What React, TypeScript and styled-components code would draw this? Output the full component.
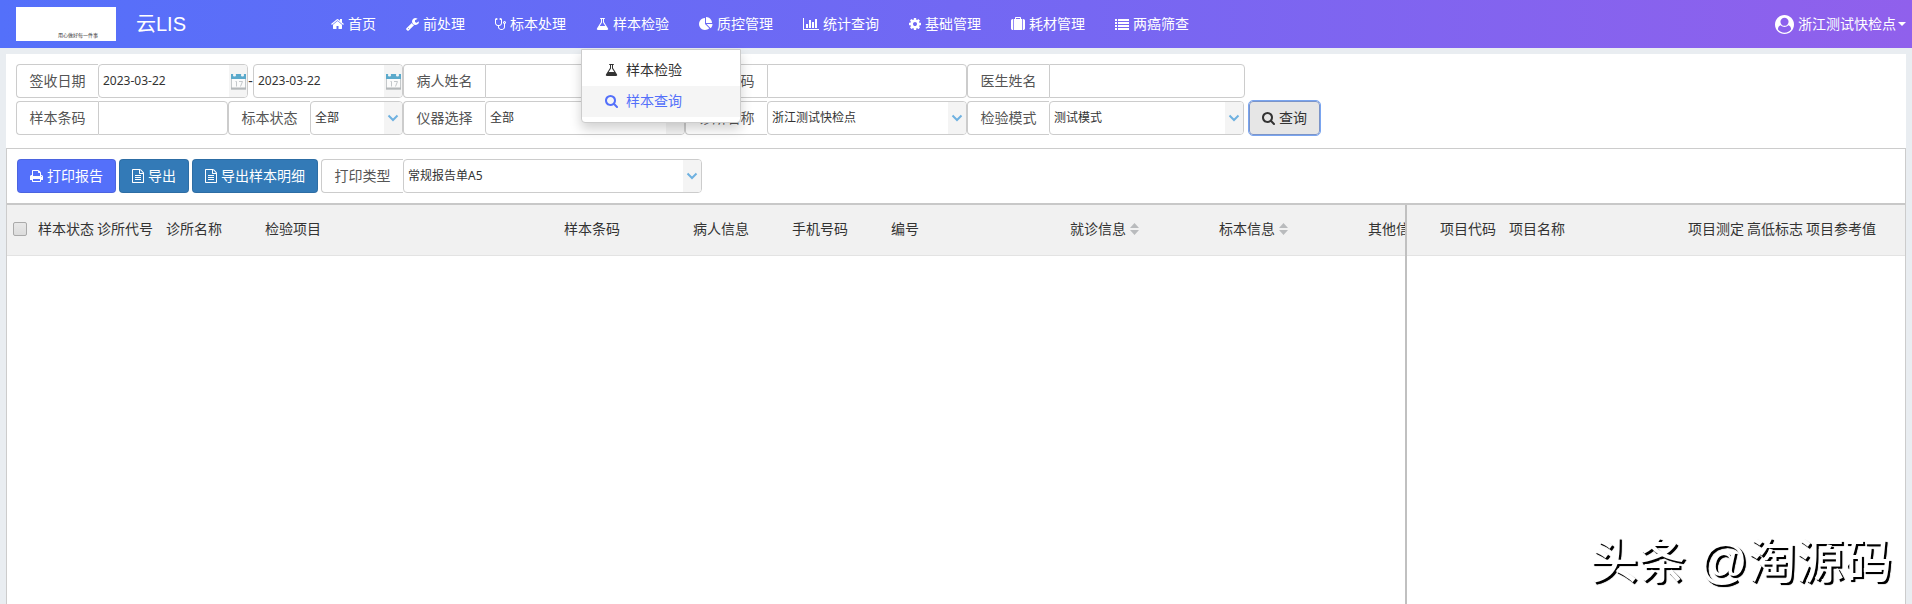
import React from 'react';
import styled, { createGlobalStyle, css } from 'styled-components';

const cjk = "'Noto Sans', 'Noto Sans CJK SC', sans-serif";

const GlobalStyle = createGlobalStyle`
  *, *::before, *::after { box-sizing: border-box; }
  body {
    margin: 0;
    background: #e9edf1;
    color: #333;
    font-family: ${cjk};
    font-size: 14px;
    line-height: 20px;
  }
  button, input, select { font: inherit; color: inherit; }
`;

/* ---------- icons ---------- */

type IconName =
  | 'home' | 'wrench' | 'stethoscope' | 'flask' | 'pie' | 'bar' | 'cog'
  | 'suitcase' | 'list' | 'search' | 'print' | 'file';

const icons: Record<IconName, { w: number; x: number; vw: number; d: string }> = {
  home: { w: 13, x: 64, vw: 1664, d: 'M1472 992v480q0 26-19 45t-45 19h-384v-384h-256v384h-384q-26 0-45-19t-19-45v-480q0-1 .5-3t.5-3l575-474 575 474q1 2 1 6zm223-69l-62 74q-8 9-21 11h-3q-13 0-21-7l-692-577-692 577q-12 8-24 7-13-2-21-11l-62-74q-8-10-7-23.5t11-21.5l719-599q32-26 76-26t76 26l244 204v-195q0-14 9-23t23-9h192q14 0 23 9t9 23v408l219 182q10 8 11 21.5t-7 23.5z' },
  wrench: { w: 13, x: 64, vw: 1664, d: 'M448 1472q0-26-19-45t-45-19-45 19-19 45 19 45 45 19 45-19 19-45zm644-420l-682 682q-37 37-90 37-52 0-91-37l-106-108q-38-36-38-90 0-53 38-91l681-681q39 98 114.5 173.5t173.5 114.5zm634-435q0 39-23 106-47 134-164.5 217.5t-258.5 83.5q-185 0-316.5-131.5t-131.5-316.5 131.5-316.5 316.5-131.5q58 0 121.5 16.5t107.5 46.5q16 11 16 28t-16 28l-293 169v224l193 107q5-3 79-48.5t135.5-81 70.5-35.5q15 0 23.5 10t8.5 25z' },
  stethoscope: { w: 11, x: 192, vw: 1408, d: 'M1472 704q0-26-19-45t-45-19-45 19-19 45 19 45 45 19 45-19 19-45zm128 0q0 62-35.5 111t-92.5 70v395q0 159-131.5 271.5t-316.5 112.5-316.5-112.5-131.5-271.5v-132q-164-20-274-128t-110-252v-512q0-26 19-45t45-19q6 0 16 2 17-30 47-48t65-18q53 0 90.5 37.5t37.5 90.5-37.5 90.5-90.5 37.5q-33 0-64-18v402q0 106 94 181t226 75 226-75 94-181v-402q-31 18-64 18-53 0-90.5-37.5t-37.5-90.5 37.5-90.5 90.5-37.5q35 0 65 18t47 48q10-2 16-2 26 0 45 19t19 45v512q0 144-110 252t-274 128v132q0 106 94 181t226 75 226-75 94-181v-395q-57-21-92.5-70t-35.5-111q0-80 56-136t136-56 136 56 56 136z' },
  flask: { w: 13, x: 64, vw: 1664, d: 'M1591 1448q56 89 21.5 152.5t-140.5 63.5h-1152q-106 0-140.5-63.5t21.5-152.5l503-793v-399h-64q-26 0-45-19t-19-45 19-45 45-19h512q26 0 45 19t19 45-19 45-45 19h-64v399zm-779-725l-272 429h712l-272-429-20-31v-436h-128v436z' },
  pie: { w: 14, x: 0, vw: 1792, d: 'M768 890l546 546q-106 108-247.5 168t-298.5 60q-209 0-385.5-103t-279.5-279.5-103-385.5 103-385.5 279.5-279.5 385.5-103v762zm187 6h773q0 157-60 298.5t-168 247.5zm709-128h-768v-768q209 0 385.5 103t279.5 279.5 103 385.5z' },
  bar: { w: 16, x: 0, vw: 2048, d: 'M640 896v512h-256v-512h256zm384-512v1024h-256v-1024h256zm1024 1152v128h-2048v-1536h128v1408h1920zm-640-896v768h-256v-768h256zm384-384v1152h-256v-1152h256z' },
  cog: { w: 12, x: 128, vw: 1536, d: 'M1152 896q0-106-75-181t-181-75-181 75-75 181 75 181 181 75 181-75 75-181zm512-109v222q0 12-8 23t-20 13l-185 28q-19 54-39 91 35 50 107 138 10 12 10 25t-9 23q-27 37-99 108t-94 71q-12 0-26-9l-138-108q-44 23-91 38-16 136-29 186-7 28-36 28h-222q-14 0-24.5-8.5t-11.5-21.5l-28-184q-49-16-90-37l-141 107q-10 9-25 9-14 0-25-11-126-114-165-168-7-10-7-23 0-12 8-23 15-21 51-66.5t54-70.5q-27-50-41-99l-183-27q-13-2-21-12.5t-8-23.5v-222q0-12 8-23t19-13l186-28q14-46 39-92-40-57-107-138-10-12-10-24 0-10 9-23 26-36 98.5-107.5t94.5-71.5q13 0 26 10l138 107q44-23 91-38 16-136 29-186 7-28 36-28h222q14 0 24.5 8.5t11.5 21.5l28 184q49 16 90 37l142-107q9-9 24-9 13 0 25 10 129 119 165 170 7 8 7 22 0 12-8 23-15 21-51 66.5t-54 70.5q26 50 41 98l183 28q13 2 21 12.5t8 23.5z' },
  suitcase: { w: 14, x: 0, vw: 1792, d: 'M640 256h512v-128h-512v128zm-352 0v1408h-64q-92 0-158-66t-66-158v-960q0-92 66-158t158-66h64zm1120 0v1408h-1024v-1408h128v-160q0-40 28-68t68-28h576q40 0 68 28t28 68v160h128zm384 224v960q0 92-66 158t-158 66h-64v-1408h64q92 0 158 66t66 158z' },
  list: { w: 14, x: 0, vw: 1792, d: 'M0 256h256v256h-256zM384 256h1408v256h-1408zM0 640h256v256h-256zM384 640h1408v256h-1408zM0 1024h256v256h-256zM384 1024h1408v256h-1408zM0 1408h256v256h-256zM384 1408h1408v256h-1408z' },
  search: { w: 13, x: 64, vw: 1664, d: 'M1216 832q0-185-131.5-316.5t-316.5-131.5-316.5 131.5-131.5 316.5 131.5 316.5 316.5 131.5 316.5-131.5 131.5-316.5zm512 832q0 52-38 90t-90 38q-54 0-90-38l-343-342q-179 124-399 124-143 0-273.5-55.5t-225-150-150-225-55.5-273.5 55.5-273.5 150-225 225-150 273.5-55.5 273.5 55.5 225 150 150 225 55.5 273.5q0 220-124 399l343 343q37 37 37 90z' },
  print: { w: 13, x: 64, vw: 1664, d: 'M448 1536h896v-256h-896v256zm0-640h896v-384h-160q-40 0-68-28t-28-68v-160h-640v640zm1152 64q0-26-19-45t-45-19-45 19-19 45 19 45 45 19 45-19 19-45zm128 0v416q0 13-9.5 22.5t-22.5 9.5h-224v160q0 40-28 68t-68 28h-960q-40 0-68-28t-28-68v-160h-224q-13 0-22.5-9.5t-9.5-22.5v-416q0-79 56.5-135.5t135.5-56.5h64v-544q0-40 28-68t68-28h672q40 0 88 20t76 48l152 152q28 28 48 76t20 88v256h64q79 0 135.5 56.5t56.5 135.5z' },
  file: { w: 12, x: 128, vw: 1536, d: 'M1596 380q28 28 48 76t20 88v1152q0 40-28 68t-68 28h-1344q-40 0-68-28t-28-68v-1600q0-40 28-68t68-28h896q40 0 88 20t76 48zm-444-244v376h376q-10-29-22-41l-313-313q-12-12-41-22zm384 1528v-1024h-416q-40 0-68-28t-28-68v-416h-768v1536h1280zm-1024-864q0-14 9-23t23-9h704q14 0 23 9t9 23v64q0 14-9 23t-23 9h-704q-14 0-23-9t-9-23v-64zm736 224q14 0 23 9t9 23v64q0 14-9 23t-23 9h-704q-14 0-23-9t-9-23v-64q0-14 9-23t23-9h704zm0 256q14 0 23 9t9 23v64q0 14-9 23t-23 9h-704q-14 0-23-9t-9-23v-64q0-14 9-23t23-9h704z' },
};

const Glyph = styled.svg`
  flex: none;
  display: block;
  fill: currentColor;
`;

const Icon = ({ name }: { name: IconName }) => {
  const { w, x, vw, d } = icons[name];
  return (
    <Glyph width={w} height={14} viewBox={`${x} 0 ${vw} 1792`} aria-hidden="true">
      <path d={d} />
    </Glyph>
  );
};

const UserIcon = () => (
  <Glyph width={19} height={19} viewBox="0 0 1792 1792" aria-hidden="true">
    <path d="M1523 1339q-22-155-87.500-257.500t-184.500-118.500q-67 74-159.500 115.500t-195.500 41.500-195.500-41.500-159.500-115.500q-119 16-184.500 118.500t-87.500 257.500q106 150 271 237.500t356 87.500 356-87.500 271-237.500zm-243-699q0-159-112.500-271.500t-271.500-112.500-271.500 112.500-112.500 271.500 112.500 271.500 271.500 112.500 271.500-112.500 112.500-271.500zm512 256q0 182-71 347.500t-190.500 286-285.500 191.500-349 71q-182 0-348-71t-286-191-191-286-71-348 71-348 191-286 286-191 348-71 348 71 286 191 191 286 71 348z" />
  </Glyph>
);

const ChevronIcon = () => (
  <Glyph width={12} height={8} viewBox="0 0 12 8" aria-hidden="true">
    <path d="M1.500 1.500L6 6L10.500 1.500" fill="none" stroke="#6fb1e0" strokeWidth="2" />
  </Glyph>
);

const CalendarIcon = () => (
  <Glyph width={15} height={17} viewBox="0 0 15 17" aria-hidden="true">
    <rect x="0.500" y="2" width="14" height="14" fill="#fbfbfb" stroke="#c4c8ca" />
    <rect x="0" y="1" width="15" height="5" fill="#5aa9cb" />
    <circle cx="3.500" cy="2" r="1.600" fill="#f2f6f8" />
    <circle cx="11.500" cy="2" r="1.600" fill="#f2f6f8" />
    <path d="M4.500 8.500h1v5M8 8.500h3.500l-2 5" fill="none" stroke="#c3c7ca" />
    <path d="M0 15.500h15" stroke="#b4b8ba" strokeWidth="2" />
  </Glyph>
);

const SortIcon = () => (
  <Glyph width={9} height={12} viewBox="0 0 9 12" aria-hidden="true">
    <path d="M0 5L4.500 0L9 5zM0 7L4.500 12L9 7z" fill="#b9bbbd" />
  </Glyph>
);

/* ---------- header ---------- */

const Page = styled.div`
  min-height: 100vh;
  display: flex;
  flex-direction: column;
`;

const Header = styled.header`
  display: flex;
  align-items: center;
  height: 48px;
  padding: 0 6px 0 16px;
  color: #fff;
  background: linear-gradient(90deg, #5470fa, #9060ec);
`;

const Logo = styled.div`
  width: 100px;
  height: 34px;
  padding: 0 18px 2px 0;
  display: flex;
  align-items: flex-end;
  justify-content: flex-end;
  background: #fff;
  color: #333;
  font-size: 5px;
  line-height: 8px;
`;

const Brand = styled.div`
  width: 200px;
  padding-left: 20px;
  font-family: 'Liberation Sans', 'Noto Sans CJK SC', sans-serif;
  font-size: 20px;
  line-height: 28px;
`;

const Nav = styled.nav`
  flex: 1;
  display: flex;
`;

const NavItem = styled.div`
  position: relative;
`;

const NavLink = styled.a`
  height: 48px;
  padding: 0 15px;
  display: flex;
  align-items: center;
  gap: 4px;
  color: #fff;
  text-decoration: none;
  white-space: nowrap;
`;

const Menu = styled.div`
  position: absolute;
  top: 100%;
  left: 0;
  z-index: 10;
  width: 160px;
  margin-top: 1px;
  padding: 5px 0;
  background: #fff;
  border: 1px solid #ccc;
  border-radius: 0 0 4px 4px;
  box-shadow: 0 6px 12px rgba(0, 0, 0, 0.18);
`;

const MenuLink = styled.a<{ $active?: boolean }>`
  height: 31px;
  padding: 0 23px 2px;
  display: flex;
  align-items: center;
  gap: 8px;
  color: ${(p) => (p.$active ? '#5470fa' : '#333')};
  background: ${(p) => (p.$active ? '#f5f5f5' : 'transparent')};
  text-decoration: none;
`;

const Account = styled.button`
  display: flex;
  align-items: center;
  gap: 4px;
  padding: 0;
  border: 0;
  background: none;
  cursor: pointer;
`;

const Caret = styled.span`
  border: 4px solid transparent;
  border-top-color: currentColor;
  border-bottom: 0;
  margin-left: -2px;
`;

/* ---------- forms ---------- */

const Main = styled.main`
  flex: 1;
  display: flex;
  flex-direction: column;
  margin: 6px 6px 0;
`;

const SearchPanel = styled.form`
  display: flex;
  flex-direction: column;
  gap: 3px;
  padding: 10px 10px 13px;
  background: #fff;
`;

const Row = styled.div`
  display: flex;
`;

const Label = styled.label`
  flex: none;
  width: 82px;
  height: 34px;
  display: flex;
  align-items: center;
  justify-content: center;
  color: #555;
  background: #fff;
  border: 1px solid #ccc;
  border-right: 0;
  border-radius: 4px 0 0 4px;
`;

const box = css`
  height: 34px;
  border: 1px solid #ccc;
  background: #fff;
`;

const TextBox = styled.input<{ $w: number }>`
  ${box}
  width: ${(p) => p.$w}px;
  padding: 0 4px;
  border-radius: 0 4px 4px 0;
  outline: 0;
  font-size: 12px;
`;

const Combo = styled.span<{ $w: number }>`
  ${box}
  width: ${(p) => p.$w}px;
  display: flex;
  border-radius: 4px;
  overflow: hidden;
`;

const comboField = css`
  flex: 1;
  min-width: 0;
  height: 100%;
  padding: 0 4px;
  border: 0;
  outline: 0;
  background: none;
  font-size: 12px;
`;

const DateInput = styled.input`
  ${comboField}
  padding-bottom: 2px;
`;

const Select = styled.select`
  ${comboField}
  appearance: none;
`;

const Addon = styled.span`
  flex: none;
  width: 18px;
  display: flex;
  align-items: center;
  justify-content: center;
  background: #f4f4f4;
`;

const Dash = styled.span`
  width: 5px;
  line-height: 34px;
  text-align: center;
`;

const Button = styled.button<{ $tone: string }>`
  height: 34px;
  padding: 0 12px;
  display: flex;
  align-items: center;
  gap: 4px;
  color: #fff;
  background: ${(p) => p.$tone};
  border: 1px solid rgba(0, 0, 0, 0.1);
  border-radius: 4px;
  white-space: nowrap;
`;

const QueryButton = styled(Button)`
  margin-left: 5px;
  color: #333;
  border-color: #7b94c8;
  outline: 1px solid #7aa5f0;
`;

const SelectField = ({ id, label, value, w }: { id: string; label: string; value: string; w: number }) => (
  <>
    <Label htmlFor={id}>{label}</Label>
    <Combo $w={w}>
      <Select id={id} defaultValue={value}>
        <option>{value}</option>
      </Select>
      <Addon><ChevronIcon /></Addon>
    </Combo>
  </>
);

const TextField = ({ id, label, w }: { id: string; label: string; w: number }) => (
  <>
    <Label htmlFor={id}>{label}</Label>
    <TextBox id={id} type="text" $w={w} />
  </>
);

const DateField = ({ id, name }: { id: string; name?: string }) => (
  <Combo $w={150}>
    <DateInput id={id} type="text" defaultValue="2023-03-22" aria-label={name} />
    <Addon><CalendarIcon /></Addon>
  </Combo>
);

/* ---------- results ---------- */

const Results = styled.section`
  flex: 1;
  display: flex;
  flex-direction: column;
  background: #fff;
  border: 1px solid #ccc;
  border-bottom: 0;
`;

const Toolbar = styled.div`
  display: flex;
  gap: 3px;
  padding: 10px;
`;

const Field = styled.div`
  display: flex;
`;

const Panes = styled.div`
  flex: 1;
  display: flex;
  border-top: 2px solid #c8c8c8;
`;

const ListPane = styled.div`
  flex: 1;
  min-width: 0;
  overflow: hidden;
`;

const DetailPane = styled.div`
  flex: none;
  width: 500px;
  border-left: 2px solid #c0c0c0;
  overflow: hidden;
`;

const Table = styled.table`
  width: 100%;
  table-layout: fixed;
  border-collapse: collapse;

  th {
    height: 50px;
    padding: 0 0 2px;
    font-weight: 400;
    text-align: left;
    white-space: nowrap;
    background: #f1f1f1;
    border-bottom: 1px solid #e3e3e3;
  }
`;

const SortHead = styled.span`
  display: flex;
  align-items: center;
  gap: 4px;
`;

const Check = styled.input`
  appearance: none;
  display: block;
  width: 14px;
  height: 14px;
  margin: 0 0 0 6px;
  border: 1px solid #aaa;
  border-radius: 2px;
  background: linear-gradient(#e8e8e8, #dcdcdc);
`;

const Watermark = styled.div`
  position: fixed;
  right: 20px;
  bottom: 7px;
  color: #fff;
  font-family: 'Liberation Sans', 'Noto Sans CJK SC', sans-serif;
  font-size: 48px;
  font-weight: 500;
  line-height: 70px;
  text-shadow: 2px 2px 1px #000, 2px 2px 0 #000;
  white-space: nowrap;
  pointer-events: none;
`;

const navItems: { icon: IconName; text: string }[] = [
  { icon: 'home', text: '首页' },
  { icon: 'wrench', text: '前处理' },
  { icon: 'stethoscope', text: '标本处理' },
  { icon: 'flask', text: '样本检验' },
  { icon: 'pie', text: '质控管理' },
  { icon: 'bar', text: '统计查询' },
  { icon: 'cog', text: '基础管理' },
  { icon: 'suitcase', text: '耗材管理' },
  { icon: 'list', text: '两癌筛查' },
];

const listColumns = [
  { text: '样本状态', w: 59 },
  { text: '诊所代号', w: 69 },
  { text: '诊所名称', w: 99 },
  { text: '检验项目', w: 299 },
  { text: '样本条码', w: 129 },
  { text: '病人信息', w: 99 },
  { text: '手机号码', w: 99 },
  { text: '编号', w: 179 },
  { text: '就诊信息', w: 149, sort: true },
  { text: '标本信息', w: 149, sort: true },
  { text: '其他信息' },
];

const detailColumns = [
  { text: '项目代码', w: 69 },
  { text: '项目名称', w: 179 },
  { text: '项目测定', w: 59 },
  { text: '高低标志', w: 59 },
  { text: '项目参考值' },
];

export default function App() {
  return (
    <Page>
      <GlobalStyle />
      <Header>
        <Logo>用心做好每一件事</Logo>
        <Brand>云LIS</Brand>
        <Nav>
          {navItems.map(({ icon, text }) => (
            <NavItem key={text}>
              <NavLink href="#"><Icon name={icon} />{text}</NavLink>
              {text === '样本检验' && (
                <Menu>
                  <MenuLink href="#"><Icon name="flask" />样本检验</MenuLink>
                  <MenuLink href="#" $active><Icon name="search" />样本查询</MenuLink>
                </Menu>
              )}
            </NavItem>
          ))}
        </Nav>
        <Account type="button"><UserIcon />浙江测试快检点<Caret /></Account>
      </Header>

      <Main>
        <SearchPanel onSubmit={(e) => e.preventDefault()}>
          <Row>
            <Label htmlFor="from">签收日期</Label>
            <DateField id="from" />
            <Dash>-</Dash>
            <DateField id="to" name="签收日期" />
            <TextField id="patient" label="病人姓名" w={200} />
            <TextField id="phone" label="手机号码" w={200} />
            <TextField id="doctor" label="医生姓名" w={196} />
          </Row>
          <Row>
            <TextField id="barcode" label="样本条码" w={130} />
            <SelectField id="status" label="标本状态" value="全部" w={93} />
            <SelectField id="device" label="仪器选择" value="全部" w={200} />
            <SelectField id="clinic" label="诊所名称" value="浙江测试快检点" w={200} />
            <SelectField id="mode" label="检验模式" value="测试模式" w={195} />
            <QueryButton type="submit" $tone="#e6e6e6"><Icon name="search" />查询</QueryButton>
          </Row>
        </SearchPanel>

        <Results>
          <Toolbar>
            <Button type="button" $tone="#5470fa"><Icon name="print" />打印报告</Button>
            <Button type="button" $tone="#337ab7"><Icon name="file" />导出</Button>
            <Button type="button" $tone="#337ab7"><Icon name="file" />导出样本明细</Button>
            <Field>
              <SelectField id="printType" label="打印类型" value="常规报告单A5" w={299} />
            </Field>
          </Toolbar>
          <Panes>
            <ListPane>
              <Table>
                <colgroup>
                  <col width={31} />
                  {listColumns.map((c) => <col key={c.text} width={c.w} />)}
                </colgroup>
                <thead>
                  <tr>
                    <th><Check type="checkbox" aria-label="全选" /></th>
                    {listColumns.map((c) => (
                      <th key={c.text}>
                        {c.sort ? <SortHead>{c.text}<SortIcon /></SortHead> : c.text}
                      </th>
                    ))}
                  </tr>
                </thead>
              </Table>
            </ListPane>
            <DetailPane>
              <Table>
                <colgroup>
                  <col width={33} />
                  {detailColumns.map((c) => <col key={c.text} width={c.w} />)}
                </colgroup>
                <thead>
                  <tr>
                    <th />
                    {detailColumns.map((c) => <th key={c.text}>{c.text}</th>)}
                  </tr>
                </thead>
              </Table>
            </DetailPane>
          </Panes>
        </Results>
      </Main>
      <Watermark>头条 @淘源码</Watermark>
    </Page>
  );
}
